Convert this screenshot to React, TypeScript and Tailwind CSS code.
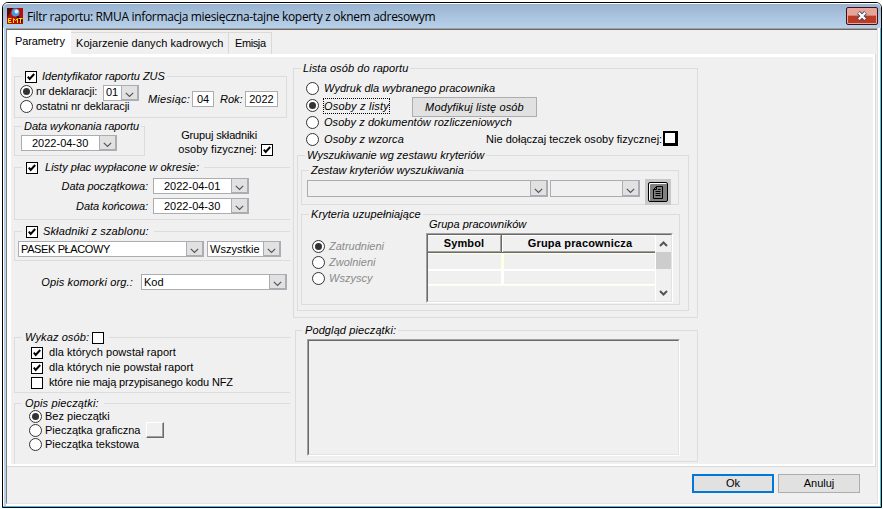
import React, { useState } from "react";
import clsx from "clsx";

interface GroupProps {
    legend: React.ReactNode;
    className?: string;
    legendClass?: string;
    children?: React.ReactNode;
}

// Etched frame, the legend sits on the top line
const Group: React.FC<GroupProps> = ({
    legend,
    className,
    legendClass = "ml-[7px] pl-[2px] pr-[2px]",
    children,
}) => (
    <div className={clsx("shrink-0 border-[#dcdcdc]", className)}>
        <div className="-mt-[8px] flex h-[15px]">
            <div
                className={clsx(
                    "flex items-center bg-[#f0f0f0] italic",
                    legendClass
                )}
            >
                {legend}
            </div>
        </div>
        {children}
    </div>
);

const Check: React.FC<{ initial?: boolean; className?: string }> = ({
    initial = false,
    className = "size-[12px] border",
}) => {
    const [checked, setChecked] = useState(initial);
    return (
        <button
            onClick={() => setChecked(!checked)}
            className={clsx(
                "flex shrink-0 items-center justify-center border-black bg-white",
                className
            )}
        >
            {checked && (
                <svg width="10" height="10" viewBox="0 0 10 10">
                    <path
                        d="M1.8 4.6 L3.7 6.9 L8.2 2"
                        fill="none"
                        stroke="#000"
                        strokeWidth="2"
                    />
                </svg>
            )}
        </button>
    );
};

const Radio: React.FC<{ on: boolean; onClick?: () => void }> = ({
    on,
    onClick,
}) => (
    <button
        onClick={onClick}
        className="flex size-[13px] shrink-0 items-center justify-center rounded-full border border-[#333] bg-white"
    >
        {on && <span className="size-[7px] rounded-full bg-[#333]" />}
    </button>
);

const Combo: React.FC<{
    value?: string;
    className: string;
    textClass?: string;
}> = ({ value, className, textClass = "pl-[2px]" }) => (
    <div
        className={clsx(
            "flex shrink-0 border border-[#abadb3] not-italic",
            className
        )}
    >
        <div
            className={clsx(
                "flex flex-1 items-center overflow-hidden",
                textClass
            )}
        >
            {value}
        </div>
        <div className="flex w-[17px] shrink-0 items-center justify-center border-r border-b border-l border-[#abadb3] bg-[#e1e1e1]">
            <svg width="9" height="6" viewBox="0 0 9 6" className="mt-[5px]">
                <path
                    d="M0.8 0.8 L4.5 4.5 L8.2 0.8"
                    fill="none"
                    stroke="#555"
                    strokeWidth="1.2"
                />
            </svg>
        </div>
    </div>
);

const TitleBar = () => (
    <div className="flex h-[25px] shrink-0 items-start rounded-t-[5px] border-t border-white bg-linear-to-b from-[#99b4d1] to-[#b9d1ea] pl-[4px]">
        <svg
            width="16"
            height="16"
            viewBox="0 0 16 16"
            className="mt-[4px] shrink-0"
        >
            <rect width="16" height="16" fill="#b80d0d" />
            <path d="M0 0h6L0 10z" fill="#5d0808" />
            <path d="M10 8l5 6" stroke="#300" strokeWidth="2" />
            <circle cx="8.5" cy="4.5" r="4" fill="#4b9bd8" />
            <circle cx="9.5" cy="3.5" r="2" fill="#d5f1ff" />
            <path
                d="M4.500 10.500h-3v4h3M1.500 12.500h2.500M6.500 15v-4.500l2 2 2-2v4.500M11.500 10.500h4M13.500 10.500v4.500"
                stroke="#ffe600"
                strokeWidth="1"
                fill="none"
            />
        </svg>
        <span className="mt-[4px] ml-[4px] font-['Open_Sans','Noto_Sans',sans-serif] text-[12px] leading-[17px] tracking-[-0.33px]">
            Filtr raportu: RMUA informacja miesięczna-tajne koperty z oknem
            adresowym
        </span>
        <button className="mt-[3px] mr-[3px] ml-auto flex h-[18px] w-[32px] items-center justify-center rounded-[2px] border border-[#43101a] bg-linear-to-b from-[#e6a59b] from-45% to-[#bb3c25] to-50% shadow-[inset_0_0_0_1px_#e9a79f]">
            <svg width="12" height="10" viewBox="0 0 12 10">
                <path
                    d="M2.500 1.500 L9.500 8.500 M9.500 1.500 L2.500 8.500"
                    stroke="#4b4f5c"
                    strokeWidth="4"
                />
                <path
                    d="M2.800 1.800 L9.200 8.200 M9.200 1.800 L2.800 8.200"
                    stroke="#fff"
                    strokeWidth="2.200"
                />
            </svg>
        </button>
    </div>
);

const LeftColumn = () => {
    const [declaration, setDeclaration] = useState(0);
    const [stamp, setStamp] = useState(0);

    return (
        <div className="flex w-[281px] shrink-0 flex-col pt-[19px] pl-[3px]">
            <Group
                className="h-[42px] w-[273px] border"
                legendClass="ml-[7px] pl-[3px] pr-[2px]"
                legend={
                    <>
                        <Check initial />
                        <span className="ml-[5px]">
                            Identyfikator raportu ZUS
                        </span>
                    </>
                }
            >
                <div className="flex pl-[5px]">
                    <div className="w-[128px]">
                        <div className="flex h-[15px] items-center">
                            <Radio
                                on={declaration === 0}
                                onClick={() => setDeclaration(0)}
                            />
                            <span className="ml-[3px] w-[67px] tracking-[-0.08px]">
                                nr deklaracji:
                            </span>
                            <Combo
                                value="01"
                                className="mt-[2px] h-[16px] w-[36px] bg-white"
                            />
                        </div>
                        <div className="flex h-[15px] items-center">
                            <Radio
                                on={declaration === 1}
                                onClick={() => setDeclaration(1)}
                            />
                            <span className="ml-[3px] tracking-[-0.06px]">
                                ostatni nr deklaracji
                            </span>
                        </div>
                    </div>
                    <div className="flex h-[30px] items-center">
                        <span className="w-[44px] tracking-[0.2px] italic">
                            Miesiąc:
                        </span>
                        <span className="flex h-[16px] w-[22px] items-center justify-center border border-[#abadb3] bg-white">
                            04
                        </span>
                        <span className="ml-[6px] w-[25px] italic">Rok:</span>
                        <span className="flex h-[16px] w-[33px] items-center justify-center border border-[#abadb3] bg-white">
                            2022
                        </span>
                    </div>
                </div>
            </Group>

            <div className="mt-[8px] flex h-[30px]">
                <Group
                    className="h-[30px] w-[131px] border"
                    legendClass="ml-[7px] pl-[2px] pr-[2px] tracking-[-0.05px]"
                    legend="Data wykonania raportu"
                >
                    <div className="pt-[1px] pl-[6px]">
                        <Combo
                            value="2022-04-30"
                            textClass="pl-[10px]"
                            className="h-[16px] w-[96px] bg-white"
                        />
                    </div>
                </Group>
                <div className="w-[112px] shrink-0 pt-[2px] text-right leading-[14px]">
                    <div className="tracking-[-0.15px]">Grupuj składniki</div>
                    <div className="tracking-[0.07px]">osoby fizycznej:</div>
                </div>
                <Check
                    initial
                    className="mt-[18px] ml-[4px] size-[12px] border"
                />
            </div>

            <Group
                className="mt-[11px] h-[53px] w-[276px] border border-r-0"
                legendClass="ml-[7px] pl-[4px] pr-[5px]"
                legend={
                    <>
                        <Check initial />
                        <span className="ml-[7px] tracking-[0.02px]">
                            Listy płac wypłacone w okresie:
                        </span>
                    </>
                }
            >
                <div className="flex flex-col gap-1 pt-[3px] italic">
                    <div className="flex items-center">
                        <span className="mr-[5px] w-[133px] text-right tracking-[-0.06px]">
                            Data początkowa:
                        </span>
                        <Combo
                            value="2022-04-01"
                            textClass="pl-[10px]"
                            className="h-[16px] w-[96px] bg-white"
                        />
                    </div>
                    <div className="flex items-center">
                        <span className="mr-[5px] w-[133px] text-right tracking-[-0.06px]">
                            Data końcowa:
                        </span>
                        <Combo
                            value="2022-04-30"
                            textClass="pl-[10px]"
                            className="h-[16px] w-[96px] bg-white"
                        />
                    </div>
                </div>
            </Group>

            <Group
                className="mt-[11px] h-[30px] w-[276px] border border-r-0"
                legendClass="ml-[7px] pl-[4px] pr-[5px]"
                legend={
                    <>
                        <Check initial />
                        <span className="ml-[5px] tracking-[0.14px]">
                            Składniki z szablonu:
                        </span>
                    </>
                }
            >
                <div className="flex gap-[3px] pt-[2px] pl-[3px]">
                    <Combo
                        value="PASEK PŁACOWY"
                        textClass="pl-[2px] tracking-[-0.38px]"
                        className="h-[16px] w-[186px] bg-white"
                    />
                    <Combo
                        value="Wszystkie"
                        className="h-[16px] w-[74px] bg-white"
                    />
                </div>
            </Group>

            <div className="mt-[13px] flex h-[16px] items-center">
                <span className="w-[119px] text-right tracking-[0.14px] italic">
                    Opis komorki org.:
                </span>
                <Combo
                    value="Kod"
                    className="ml-[8px] h-[16px] w-[146px] bg-white"
                />
            </div>

            <Group
                className="mt-[47px] h-[56px] w-[276px] border border-r-0"
                legendClass="ml-[7px] pl-[3px] pr-[5px]"
                legend={
                    <>
                        <span className="w-[67px] tracking-[0.1px]">
                            Wykaz osób:
                        </span>
                        <Check />
                    </>
                }
            >
                <div className="pl-[16px]">
                    <div className="flex h-[15px] items-center">
                        <Check initial />
                        <span className="ml-[6px] tracking-[0.06px]">
                            dla których powstał raport
                        </span>
                    </div>
                    <div className="flex h-[15px] items-center">
                        <Check initial />
                        <span className="ml-[6px] tracking-[0.04px]">
                            dla których nie powstał raport
                        </span>
                    </div>
                    <div className="flex h-[15px] items-center">
                        <Check />
                        <span className="ml-[6px] tracking-[-0.14px]">
                            które nie mają przypisanego kodu NFZ
                        </span>
                    </div>
                </div>
            </Group>

            <Group
                className="mt-[10px] h-[61px] w-[276px] border-t border-l"
                legendClass="ml-[7px] pl-[3px] pr-[5px] tracking-[0.15px]"
                legend="Opis pieczątki:"
            >
                <div className="-mt-[2px] flex pl-[14px]">
                    <div className="w-[117px]">
                        {[
                            "Bez pieczątki",
                            "Pieczątka graficzna",
                            "Pieczątka tekstowa",
                        ].map((label, i) => (
                            <div
                                key={label}
                                className="flex h-[14px] items-center"
                            >
                                <Radio
                                    on={stamp === i}
                                    onClick={() => setStamp(i)}
                                />
                                <span className="ml-[3px]">{label}</span>
                            </div>
                        ))}
                    </div>
                    <button className="mt-[13px] h-[16px] w-[18px] border border-t-white border-r-[#696969] border-b-[#696969] border-l-white bg-[#f0f0f0] shadow-[inset_-1px_-1px_0_#a0a0a0]" />
                </div>
            </Group>
        </div>
    );
};

const GroupTable = () => (
    <div className="flex h-[70px] w-[247px] border border-t-[#a0a0a0] border-r-white border-b-white border-l-[#a0a0a0]">
        <div className="flex flex-1 border border-t-[#696969] border-r-[#e3e3e3] border-b-[#e3e3e3] border-l-[#696969]">
            <div className="w-[227px]">
                <div className="flex h-[18px] border-b border-[#696969] font-bold">
                    <div className="flex w-[73px] items-center justify-center border-t border-r border-b border-t-white border-r-[#a0a0a0] border-b-[#a0a0a0] tracking-[0.1px]">
                        Symbol
                    </div>
                    <div className="w-[2px] border-r border-r-white bg-[#696969]" />
                    <div className="flex flex-1 items-center justify-center border-t border-b border-t-white border-b-[#a0a0a0] pl-[2px] tracking-[0.18px]">
                        Grupa pracownicza
                    </div>
                </div>
                <div className="flex h-[16px] border-t border-[#ffffe1]">
                    <div className="w-[73px]" />
                    <div className="w-[3px] bg-[#ffffe1]" />
                </div>
                <div className="flex h-[16px] border-t-2 border-b border-t-white border-b-white">
                    <div className="w-[73px]" />
                    <div className="w-[3px] bg-white" />
                </div>
                <div className="h-[1px] bg-[#ffffe1]" />
            </div>
            <div className="flex w-[16px] flex-col items-center border-l border-white">
                <div className="flex h-[17px] items-center">
                    <svg width="9" height="6" viewBox="0 0 9 6">
                        <path
                            d="M1 5 L4.500 1.500 L8 5"
                            fill="none"
                            stroke="#555"
                            strokeWidth="2"
                        />
                    </svg>
                </div>
                <div className="h-[17px] w-[15px] bg-[#cdcdcd]" />
                <div className="mt-auto flex h-[17px] items-center">
                    <svg width="9" height="6" viewBox="0 0 9 6">
                        <path
                            d="M1 1 L4.500 4.500 L8 1"
                            fill="none"
                            stroke="#555"
                            strokeWidth="2"
                        />
                    </svg>
                </div>
            </div>
        </div>
    </div>
);

const RightColumn = () => {
    const [source, setSource] = useState(1);

    return (
        <div className="flex flex-col pt-[11px] pl-[1px]">
            <Group
                className="h-[250px] w-[405px] border"
                legendClass="ml-[7px] pl-[2px] pr-[2px] tracking-[0.1px]"
                legend="Lista osób do raportu"
            >
                <div className="pt-[4px] pl-[12px] italic">
                    <div className="flex h-[17px] items-center">
                        <Radio on={source === 0} onClick={() => setSource(0)} />
                        <span className="ml-[5px] tracking-[0.02px]">
                            Wydruk dla wybranego pracownika
                        </span>
                    </div>
                    <div className="flex h-[17px] items-center">
                        <Radio on={source === 1} onClick={() => setSource(1)} />
                        <span className="ml-[4px] w-[67px] border border-dotted border-black leading-[14px] tracking-[0.2px]">
                            Osoby z listy
                        </span>
                        <button className="ml-[22px] flex h-[20px] w-[125px] items-center justify-center self-start border border-[#adadad] bg-[#e1e1e1] tracking-[0.14px] italic">
                            Modyfikuj listę osób
                        </button>
                    </div>
                    <div className="flex h-[17px] items-center">
                        <Radio on={source === 2} onClick={() => setSource(2)} />
                        <span className="ml-[5px] tracking-[0.06px]">
                            Osoby z dokumentów rozliczeniowych
                        </span>
                    </div>
                    <div className="flex h-[17px] items-center">
                        <Radio on={source === 3} onClick={() => setSource(3)} />
                        <span className="ml-[5px] w-[162px] tracking-[0.12px]">
                            Osoby z wzorca
                        </span>
                        <span className="w-[177px] tracking-[0.02px] not-italic">
                            Nie dołączaj teczek osoby fizycznej:
                        </span>
                        <Check className="-mt-[2px] size-[15px] border-2 border-t border-l shadow-[inset_0_0_0_1px_#000]" />
                    </div>
                </div>

                <Group
                    className="mt-[7px] ml-[3px] h-[156px] w-[392px] border"
                    legend="Wyszukiwanie wg zestawu kryteriów"
                >
                    <Group
                        className="mt-[7px] ml-[3px] h-[35px] w-[378px] border"
                        legend="Zestaw kryteriów wyszukiwania"
                    >
                        <div className="flex pt-[2px] pl-[5px]">
                            <Combo className="h-[17px] w-[241px]" />
                            <Combo className="ml-[2px] h-[17px] w-[90px]" />
                            <button className="-mt-[1px] ml-[5px] flex size-[26px] shrink-0 items-center justify-center bg-[#c8c8c8]">
                                <span className="flex size-[20px] items-center justify-center rounded-[2px] border border-black bg-[#808080] shadow-[inset_1px_1px_0_#fff]">
                                    <svg
                                        width="12"
                                        height="15"
                                        viewBox="0 0 12 15"
                                    >
                                        <path
                                            d="M4.500 1.500H10.500V13.500H1.500V4.500M4.500 1.500L1.500 4.500H4.500V1.500M3.500 6.500H8.500M3.500 8.500H8.500M3.500 10.500H8.500M6 4.500H8.500"
                                            fill="none"
                                            stroke="#000"
                                            strokeWidth="1"
                                        />
                                    </svg>
                                </span>
                            </button>
                        </div>
                    </Group>

                    <Group
                        className="mt-[9px] ml-[3px] h-[91px] w-[379px] border"
                        legendClass="ml-[7px] pl-[2px] pr-[2px] tracking-[0.07px]"
                        legend="Kryteria uzupełniające"
                    >
                        <div className="flex">
                            <div className="w-[124px] pt-[16px] pl-[10px] text-[#8a8a8a] italic">
                                {["Zatrudnieni", "Zwolnieni", "Wszyscy"].map(
                                    (label, i) => (
                                        <div
                                            key={label}
                                            className="flex h-[16px] items-center"
                                        >
                                            <Radio on={i === 0} />
                                            <span className="ml-[4px]">
                                                {label}
                                            </span>
                                        </div>
                                    )
                                )}
                            </div>
                            <div className="-mt-[5px]">
                                <div className="h-[16px] pl-[3px] italic">
                                    Grupa pracowników
                                </div>
                                <GroupTable />
                            </div>
                        </div>
                    </Group>
                </Group>
            </Group>

            <Group
                className="mt-[12px] ml-[2px] h-[132px] w-[403px] border"
                legendClass="ml-[7px] pl-[2px] pr-[2px] tracking-[0.1px]"
                legend="Podgląd pieczątki:"
            >
                <div className="mt-[1px] ml-[11px] h-[117px] w-[373px] border border-t-[#a0a0a0] border-r-white border-b-white border-l-[#a0a0a0]">
                    <div className="h-full border border-t-[#696969] border-r-[#e3e3e3] border-b-[#e3e3e3] border-l-[#696969]" />
                </div>
            </Group>
        </div>
    );
};

const App = () => {
    return (
        <div className="h-[509px] w-[883px] overflow-hidden bg-white pt-[2px] pl-[2px] font-['Liberation_Sans',Arial,sans-serif] text-[11px] leading-[15px] whitespace-nowrap text-black">
            <div className="flex h-[506px] w-[880px] flex-col rounded-t-[6px] border border-black">
                <TitleBar />
                <div className="flex min-h-0 flex-1 border-b border-[#35c5e8] bg-white">
                    <div className="w-[3px] shrink-0 border-l border-white bg-[#b9d1ea]" />
                    <div className="mb-[2px] flex w-[872px] shrink-0 flex-col border-t border-r border-b border-l border-t-[#a0a0a0] border-r-[#e3e3e3] border-b-[#e3e3e3] border-l-[#808080] bg-[#f0f0f0]">
                        <div className="h-[1px] shrink-0 bg-[#696969]" />
                        <div className="flex h-[24px] shrink-0 items-end">
                            <div className="flex h-[24px] w-[64px] items-center bg-white pb-[1px] pl-[8px] tracking-[-0.1px]">
                                Parametry
                            </div>
                            <div className="flex h-[22px] w-[158px] items-center border-t border-r border-[#d9d9d9] pl-[5px] tracking-[0.05px]">
                                Kojarzenie danych kadrowych
                            </div>
                            <div className="flex h-[22px] w-[43px] items-center border-t border-r border-[#d9d9d9] pl-[6px] tracking-[-0.4px]">
                                Emisja
                            </div>
                        </div>
                        {/* Tab page */}
                        <div className="flex h-[413px] w-[869px] shrink-0 border-r border-b border-[#d9d9d9] bg-white pt-[3px] pr-[2px] pb-[2px] pl-[4px]">
                            <div className="flex flex-1 bg-[#f0f0f0]">
                                <LeftColumn />
                                <RightColumn />
                            </div>
                        </div>
                        <div className="flex justify-end gap-1 pt-[7px] pr-[17px]">
                            <button className="h-[19px] w-[82px] border-2 border-[#0078d7] bg-[#e1e1e1]">
                                Ok
                            </button>
                            <button className="h-[19px] w-[82px] border border-[#adadad] bg-[#e1e1e1]">
                                Anuluj
                            </button>
                        </div>
                    </div>
                    <div className="ml-auto w-[1px] bg-[#35c5e8]" />
                </div>
            </div>
        </div>
    );
};

export default App;
